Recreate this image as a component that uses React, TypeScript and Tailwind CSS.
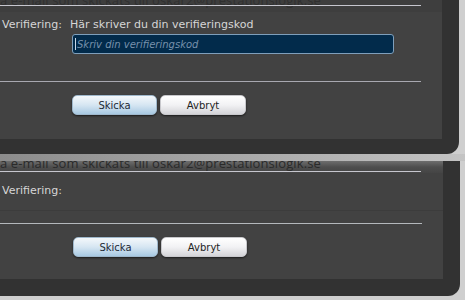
import React from "react";

const FONT = { fontFamily: '"DejaVu Sans", "Liberation Sans", sans-serif' };

function Buttons() {
  return (
    <div className="flex gap-[3px] pl-[72px]">
      <button className="w-[85px] h-[20px] rounded-[5px] bg-gradient-to-b from-[#f4f8fb] via-[#d6e6f2] to-[#a8c9e2] text-[10px] text-[#1e2a36] shadow-[0_1px_2px_rgba(0,0,0,0.6)] border border-[#9fb8cc]">
        Skicka
      </button>
      <button className="w-[86px] h-[20px] rounded-[5px] bg-gradient-to-b from-[#ffffff] via-[#f2f2f4] to-[#d4d4d8] text-[10px] text-[#222] shadow-[0_1px_2px_rgba(0,0,0,0.6)] border border-[#c8c8cc]">
        Avbryt
      </button>
    </div>
  );
}

function Header({ lineTop, textTop, textColor }: { lineTop: string; textTop: string; textColor: string }) {
  return (
    <div className="relative h-[12px] overflow-hidden">
      <div
        className={`whitespace-nowrap text-[13px] leading-[16px] tracking-[0.1px] ${textColor} ${textTop}`}
        style={{ fontFamily: '"Open Sans", sans-serif' }}
      >
        a e-mail som skickats till oskar2@prestationslogik.se
      </div>
      <div className={`absolute left-0 w-[421px] h-px bg-[#c6c6ce] ${lineTop}`} />
    </div>
  );
}

export default function App() {
  return (
    <div className="w-[465px] h-[300px] overflow-hidden bg-[#cfcfcf]" style={FONT}>
      {/* First screenshot */}
      <div className="w-[459px] bg-[#323232] pr-[17px] pb-[15px] rounded-br-[12px]">
        <div className="w-[442px] bg-[#424242] pb-[24px]">
          <div className="bg-[#3e3e3e]">
            <Header lineTop="top-[5px]" textTop="-mt-[8px]" textColor="text-[#303030]" />
          </div>
          <div className="mt-[7px] flex h-[13px] items-center text-[11px] text-[#d6d6d6]">
            <span className="w-[70px] pl-[2px]">Verifiering:</span>
            <span>Här skriver du din verifieringskod</span>
          </div>
          <div className="mt-[2px] ml-[72px] w-[322px] h-[20px] rounded-[3px] border border-[#7f9fbb] bg-[#022b4b] flex items-center pl-[2px]">
            <span className="w-px h-[12px] bg-[#c8d8e8] mr-[1px]" />
            <span className="text-[10px] italic text-[#7791ab]">Skriv din verifieringskod</span>
          </div>
          <div className="mt-[27px] w-[421px] h-px bg-[#a8a8b0]" />
          <div className="mt-[13px]">
            <Buttons />
          </div>
        </div>
      </div>

      {/* gap band */}
      <div className="h-[7px] bg-gradient-to-r from-[#8c8c8c] to-[#c4c4c4]" />

      {/* Second screenshot */}
      <div className="w-[460px] bg-[#323232] pr-[17px] pb-[17px] rounded-br-[12px]">
        <div className="w-[443px] bg-[#424242] pb-[22px]">
          <div className="bg-gradient-to-b from-[#6e6e6e] via-[#4e4e4e] to-[#454545]">
            <Header lineTop="top-[10px]" textTop="-mt-[6px]" textColor="text-[#2a2a2a]" />
          </div>
          <div className="mt-[12px] flex h-[13px] items-center text-[11px] text-[#d6d6d6]">
            <span className="w-[70px] pl-[2px]">Verifiering:</span>
          </div>
          <div className="mt-[12px] h-px bg-[#3c3c3c]" />
          <div className="mt-[12px] w-[422px] h-px bg-[#b4b8bc]" />
          <div className="mt-[13px] pl-[1px]">
            <Buttons />
          </div>
        </div>
      </div>
    </div>
  );
}
